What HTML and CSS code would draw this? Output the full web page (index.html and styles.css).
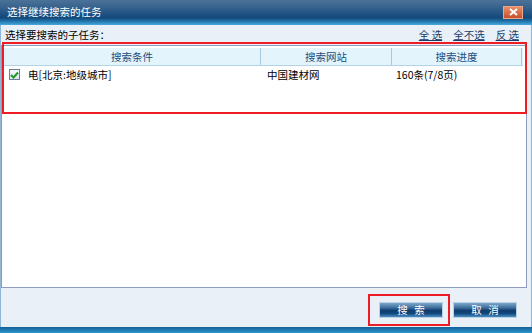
FILE: index.html
```html
<!DOCTYPE html>
<html>
<head>
<meta charset="utf-8">
<link rel="stylesheet" href="styles.css">
</head>
<body>
<div class="window">
  <div class="titlebar">
    <span class="title">选择继续搜索的任务</span>
    <span class="close"><svg width="9" height="8" viewBox="0 0 9 8"><path d="M1 1 L8 7 M8 1 L1 7" stroke="#fff" stroke-width="2"/></svg></span>
  </div>
  <div class="content">
    <div class="toolbar">
      <span class="label">选择要搜索的子任务：</span>
      <span class="links"><a class="lnk">全 选</a><a class="lnk">全不选</a><a class="lnk">反 选</a></span>
    </div>
    <div class="list">
      <div class="head">
        <div class="hc">搜索条件</div>
        <div class="hc">搜索网站</div>
        <div class="hc">搜索进度</div>
      </div>
      <div class="row">
        <div class="c1"><span class="chk"><svg width="9" height="8" viewBox="0 0 9 8"><path d="M1 4 L3.5 6.5 L8 1.5" stroke="#1e9a2a" stroke-width="2" fill="none"/></svg></span>电[北京:地级城市]</div>
        <div class="c2">中国建材网</div>
        <div class="c3">160条(7/8页)</div>
      </div>
    </div>
    <div class="footer">
      <button class="btn">搜 索</button>
      <button class="btn">取 消</button>
    </div>
  </div>
  <div class="bottombar"></div>
  <div class="mark mark-list"></div>
  <div class="mark mark-btn"></div>
</div>
</body>
</html>
```
FILE: styles.css
```css
html, body { margin: 0; padding: 0; }
body { width: 532px; height: 333px; overflow: hidden; font-family: "Noto Sans CJK SC", "Noto Sans", sans-serif; font-size: 10.5px; color: #000; }
.window { position: relative; width: 532px; height: 333px; display: flex; flex-direction: column; background: #e9f0f7; }
.titlebar { height: 25px; flex: none; display: flex; align-items: center; justify-content: space-between; padding: 0 9px 0 7px; box-sizing: border-box;
  background: linear-gradient(to bottom, #4c7298 0%, #36628d 30%, #1a4f80 60%, #134a7b 72%, #2378b0 86%, #47aadd 100%); }
.title { color: #fff; font-size: 10.5px; line-height: 14px; margin-top: -1px; }
.close { width: 20px; height: 13px; box-sizing: border-box; border: 1px solid #e9a88a; background: linear-gradient(to bottom, #e98c64, #c9502c); display: flex; align-items: center; justify-content: center; margin-top: -1px; }
.content { flex: 1; display: flex; flex-direction: column; border-left: 1px solid #8fb6d4; border-right: 1px solid #8fb6d4; padding: 0 4px 0 0; }
.toolbar { height: 20px; display: flex; align-items: center; justify-content: space-between; padding: 0 8px 0 4px; }
.label { line-height: 14px; }
.links { display: flex; gap: 11px; }
.lnk { color: #1a3c6c; text-decoration: underline; line-height: 14px; }
.list { height: 243px; box-sizing: border-box; border: 1px solid #8e9cbf; background: #fff; padding: 2px 3px 0 2px; display: flex; flex-direction: column; }
.head { display: grid; grid-template-columns: 257px 131px 130px; height: 17px; background: #e3f4fc; border-bottom: 1px solid #b2d4e8; }
.hc { color: #1b4d7e; text-align: center; line-height: 17px; border-right: 1px solid #a9cbe0; }
.row { display: grid; grid-template-columns: 257px 131px 130px; height: 17px; line-height: 17px; }
.c1 { display: flex; align-items: center; padding-left: 5px; }
.c2 { padding-left: 6px; }
.c3 { padding-left: 4px; }
.chk { width: 11px; height: 11px; box-sizing: border-box; border: 1px solid #6a7f9a; background: linear-gradient(#f4f6f8, #dde3ea); display: inline-flex; align-items: center; justify-content: center; margin-right: 8px; }
.footer { flex: 1; display: flex; justify-content: flex-end; align-items: flex-start; gap: 10px; padding: 14px 10px 0 0; }
.btn { width: 64px; height: 16px; box-sizing: border-box; border: 1px solid #b9d2e6; padding: 0; font-family: inherit; font-size: 10.5px; color: #fff; line-height: 14px; letter-spacing: 2px; text-indent: 2px;
  background: linear-gradient(to bottom, #7ea7c8 0%, #3b6c9b 35%, #0d3b6c 55%, #11497e 75%, #4b8cc0 100%); }
.bottombar { height: 6px; flex: none; background: linear-gradient(to bottom, #135f95, #2f97d0); }
.mark { position: absolute; border: 2px solid #ee1c24; box-sizing: border-box; pointer-events: none; }
.mark-list { left: 2px; top: 42px; width: 525px; height: 72px; }
.mark-btn { left: 368px; top: 294px; width: 82px; height: 32px; }
```
